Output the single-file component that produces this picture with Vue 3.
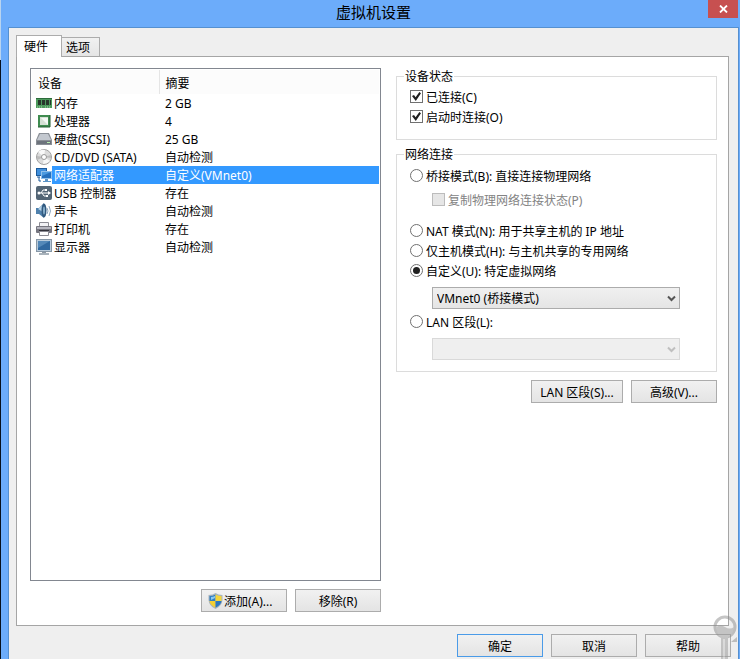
<template>
  <div class="desktop">
    <div class="dialog">
      <header class="title-bar">
        <h1 class="title">虚拟机设置</h1>
        <button type="button" class="close-btn" aria-label="关闭">
          <svg width="9" height="8" viewBox="0 0 9 8">
            <path d="M1 .5 L8 7.500 M8 .5 L1 7.500" stroke="#fff" stroke-width="1.800" fill="none" />
          </svg>
        </button>
      </header>

      <main class="client">
        <nav class="tabs">
          <button
            v-for="tab in tabs"
            :key="tab"
            type="button"
            class="tab"
            :class="{ active: tab === activeTab }"
            @click="activeTab = tab"
          >
            {{ tab }}
          </button>
        </nav>

        <div class="panel">
          <section class="hardware">
            <div class="device-list">
              <table class="device-table">
                <thead>
                  <tr>
                    <th class="col-device">设备</th>
                    <th>摘要</th>
                  </tr>
                </thead>
                <tbody>
                  <tr
                    v-for="device in devices"
                    :key="device.name"
                    :class="{ selected: device.name === selectedDevice }"
                    @click="selectedDevice = device.name"
                  >
                    <td>
                      <div class="device-name">
                        <svg class="device-icon" width="16" height="16" viewBox="0 0 16 16" v-html="device.icon"></svg>
                        <span class="device-label">{{ device.name }}</span>
                      </div>
                    </td>
                    <td>{{ device.summary }}</td>
                  </tr>
                </tbody>
              </table>
            </div>
            <div class="button-row">
              <button type="button" class="btn with-icon">
                <svg class="shield" width="15" height="16" viewBox="0 0 15 16">
                  <path d="M7.500 0 Q10 2 14.500 2 V7 Q14 13 7.500 16 Q1 13 .5 7 V2 Q5 2 7.500 0Z" fill="#a9b4bd" />
                  <path d="M7.500 1.500 V8 H1.500 V3 Q5 3 7.500 1.500Z" fill="#2f7fc4" />
                  <path d="M7.500 1.500 Q10 3 13.500 3 V8 H7.500Z" fill="#f5d63a" />
                  <path d="M1.500 8 H7.500 V14.800 Q2 12 1.500 8Z" fill="#f3cf33" />
                  <path d="M7.500 8 H13.500 Q13 12 7.500 14.800Z" fill="#2c78c0" />
                  <path d="M3 4 Q5 4 7 3 V5 L3 7Z" fill="#8cc9ee" />
                </svg>
                添加(A)...
              </button>
              <button type="button" class="btn">移除(R)</button>
            </div>
          </section>

          <section class="settings">
            <fieldset class="group status-group">
              <legend>设备状态</legend>
              <label class="option">
                <input v-model="connected" type="checkbox" class="check" />
                已连接(C)
              </label>
              <label class="option">
                <input v-model="connectOnStart" type="checkbox" class="check" />
                启动时连接(O)
              </label>
            </fieldset>

            <fieldset class="group network-group">
              <legend>网络连接</legend>
              <label class="option">
                <input v-model="mode" type="radio" name="mode" value="bridged" class="radio" />
                桥接模式(B): 直接连接物理网络
              </label>
              <label class="option nested" :class="{ disabled: mode !== 'bridged' }">
                <input type="checkbox" class="check" :disabled="mode !== 'bridged'" />
                复制物理网络连接状态(P)
              </label>
              <label class="option">
                <input v-model="mode" type="radio" name="mode" value="nat" class="radio" />
                NAT 模式(N): 用于共享主机的 IP 地址
              </label>
              <label class="option">
                <input v-model="mode" type="radio" name="mode" value="host" class="radio" />
                仅主机模式(H): 与主机共享的专用网络
              </label>
              <label class="option">
                <input v-model="mode" type="radio" name="mode" value="custom" class="radio" />
                自定义(U): 特定虚拟网络
              </label>
              <div class="select-box">
                <select v-model="network" class="select" aria-label="特定虚拟网络" :disabled="mode !== 'custom'">
                  <option value="VMnet0">VMnet0 (桥接模式)</option>
                </select>
                <svg class="arrow" width="9" height="7" viewBox="0 0 9 7">
                  <path d="M1 1.500 L4.500 5 L8 1.500" />
                </svg>
              </div>
              <label class="option">
                <input v-model="mode" type="radio" name="mode" value="lan" class="radio" />
                LAN 区段(L):
              </label>
              <div class="select-box">
                <select class="select" aria-label="LAN 区段" :disabled="mode !== 'lan'"></select>
                <svg class="arrow" width="9" height="7" viewBox="0 0 9 7">
                  <path d="M1 1.500 L4.500 5 L8 1.500" />
                </svg>
              </div>
            </fieldset>

            <div class="button-row">
              <button type="button" class="btn wide">LAN 区段(S)...</button>
              <button type="button" class="btn">高级(V)...</button>
            </div>
          </section>
        </div>

        <footer class="button-row footer">
          <button type="button" class="btn default">确定</button>
          <button type="button" class="btn">取消</button>
          <button type="button" class="btn">帮助</button>
        </footer>
      </main>
    </div>

    <svg class="key-mark" width="27" height="44" viewBox="0 0 27 44">
      <circle cx="12" cy="12" r="10" fill="none" stroke="#8c8c8c" stroke-width="3" />
      <path d="M3 12 Q8 9 12 12 Q17 15 21 12 Q20 20 15 22 V44 H8 V22 Q4 20 3 12Z" fill="#9a9a9a" />
      <path d="M11 24 V44" stroke="#c8c8c8" stroke-width="2" />
      <path d="M18 27 L24 22 V27Z" fill="#8c8c8c" />
    </svg>
  </div>
</template>

<script setup>
import { ref } from 'vue'

const tabs = ['硬件', '选项']
const activeTab = ref('硬件')
const selectedDevice = ref('网络适配器')
const connected = ref(true)
const connectOnStart = ref(true)
const mode = ref('custom')
const network = ref('VMnet0')

const devices = [
  {
    name: '内存',
    summary: '2 GB',
    icon: `<path d="M0 3H16V13H0Z" fill="#4c9a5c"/><path d="M0 3H16V4H0Z" fill="#2c6b3a"/>
      <path d="M2 5H5V10H2ZM6 5H9V10H6ZM10 5H13V10H10ZM14 5H15V10H14Z" fill="#26372b"/>
      <path d="M1 12H7M9 12H15" stroke="#a8d8ac" stroke-dasharray="1 1"/>`
  },
  {
    name: '处理器',
    summary: '4',
    icon: `<path d="M2 2H14V14H2Z" fill="#3f8c50"/><path d="M4 4H12V12H4Z" fill="#d4e0d4"/>
      <path d="M5 5H12V12Z" fill="#f4f8f4"/><path d="M2 14H14V2" fill="none" stroke="#245c32"/>`
  },
  {
    name: '硬盘(SCSI)',
    summary: '25 GB',
    icon: `<path d="M3 2H13L16 9V14H0V9Z" fill="#8a8f96"/><path d="M4 3H12L15 9H1Z" fill="#c3c8cf"/>
      <path d="M1 10H15V13H1Z" fill="#6d737c"/><path d="M11 11.500H14" stroke="#b9efb0"/>`
  },
  {
    name: 'CD/DVD (SATA)',
    summary: '自动检测',
    icon: `<circle cx="8" cy="8" r="7.500" fill="#dcdcdc" stroke="#a2a2a2"/>
      <path d="M8 8L2 3Q5 0 9 1ZM8 8L14 12Q11 15 7 15Z" fill="#f8f8f8"/>
      <path d="M8 8L1 7L1 11ZM8 8L15 6V9Z" fill="#bcbcbc"/>
      <circle cx="8" cy="8" r="2.500" fill="#fff" stroke="#999"/>`
  },
  {
    name: '网络适配器',
    summary: '自定义(VMnet0)',
    icon: `<path d="M0 1H11V9H0Z" fill="#1d5b9c"/><path d="M1 2H10V8H1Z" fill="#3f8fdc"/>
      <path d="M5 4H16V12H5Z" fill="#8fc0ea"/><path d="M6 5H15V11H6Z" fill="#2470bd"/>
      <path d="M6 5H15L6 9Z" fill="#4a9ae0"/>
      <path d="M9 12H12V14H15V15H7V14H9Z" fill="#5b93c6"/><path d="M1 10H4M3 10V14H5" fill="none" stroke="#1d5b9c"/>`
  },
  {
    name: 'USB 控制器',
    summary: '存在',
    icon: `<rect x="0" y="1" width="16" height="14" rx="2" fill="#536575"/>
      <path d="M2 8H13M5 8L7 5H10M6 8L8 11H10" fill="none" stroke="#fff"/>
      <circle cx="3" cy="8" r="1.500" fill="#fff"/><path d="M12 6L15 8L12 10ZM9 4H11V6H9ZM10 10H12V12H10Z" fill="#fff"/>`
  },
  {
    name: '声卡',
    summary: '自动检测',
    icon: `<path d="M0 5H3L8 0V15L3 11H0Z" fill="#4f81ad"/><path d="M2 6L7 2V9Z" fill="#b5d4ea"/>
      <ellipse cx="8" cy="7.500" rx="2.500" ry="7" fill="#31597f"/><ellipse cx="8" cy="7.500" rx="1" ry="4" fill="#86aecb"/>
      <path d="M11 5Q13 8 11 11M13 3Q16 8 13 13" fill="none" stroke="#8fa9c0"/>`
  },
  {
    name: '打印机',
    summary: '存在',
    icon: `<path d="M3.500 1.500H12.500V6H3.500Z" fill="#f2f2f5" stroke="#8c8c94"/><rect x="0" y="5" width="16" height="7" rx="1" fill="#75757f"/>
      <path d="M1 6H15V8H1Z" fill="#b7b7c0"/><path d="M3 9H13V10H3Z" fill="#33333b"/>
      <path d="M3.500 10.500H12.500V14.500H3.500Z" fill="#fff" stroke="#8c8c94"/>`
  },
  {
    name: '显示器',
    summary: '自动检测',
    icon: `<path d="M0 0H16V13H0Z" fill="#8797a6"/><path d="M1 1H15V12H1Z" fill="#b9cbdb"/><path d="M2 2H14V11H2Z" fill="#31689f"/>
      <path d="M2 2H14L2 9Z" fill="#5488b8"/><path d="M6 13H10V14H6Z" fill="#8c98a3"/><path d="M3 14H13V16H3Z" fill="#a8b2bb"/>`
  }
]
</script>

<style>
body {
  margin: 0;
}
</style>

<style scoped>
.desktop {
  position: relative;
  min-height: 100vh;
  box-sizing: border-box;
  padding-left: 1px;
  display: flex;
  overflow: hidden;
  background: linear-gradient(#b8d4f0 60px, #06101c 60px);
  font-family: 'Noto Sans', 'Noto Sans CJK SC', sans-serif;
  font-size: 12px;
  line-height: 16px;
  color: #000;
}

.dialog {
  flex: 1;
  display: flex;
  flex-direction: column;
  padding-right: 1px;
  background: #6cacfa;
}

.title-bar {
  display: grid;
  grid-template-columns: 30px 1fr 30px;
  height: 27px;
  padding: 0 1px 0 8px;
}

.title {
  grid-column: 2;
  margin: 0;
  font-size: 15px;
  font-weight: 400;
  line-height: 24px;
  text-align: center;
}

.close-btn {
  height: 18px;
  padding: 0;
  border: 0;
  background: #c75050;
  display: flex;
  align-items: center;
  justify-content: center;
}

.client {
  flex: 1;
  display: flex;
  flex-direction: column;
  margin-left: 7px;
  padding: 7px 9px 2px 7px;
  border: 1px solid #5590d0;
  border-bottom: 0;
  background: #efefef;
}

.tabs {
  display: flex;
  align-items: flex-end;
}

.tab {
  height: 19px;
  padding: 2px 9px 0 4px;
  border: 1px solid #acacac;
  border-left: 0;
  border-bottom: 0;
  background: linear-gradient(#f1f1f1, #e5e5e5);
  font: inherit;
  color: inherit;
}

.tab.active {
  z-index: 1;
  height: 22px;
  margin-bottom: -1px;
  padding: 0 13px 0 7px;
  border-left: 1px solid #acacac;
  background: #fff;
}

.panel {
  flex: 1;
  display: grid;
  grid-template-columns: 351fr 321fr;
  gap: 15px;
  padding: 11px 11px 13px 13px;
  border: 1px solid #a5a5a5;
  background: #fff;
}

.hardware {
  display: flex;
  flex-direction: column;
  gap: 8px;
}

.device-list {
  flex: 1;
  padding: 1px;
  border: 1px solid #828790;
}

.device-table {
  width: 100%;
  border-collapse: collapse;
  table-layout: fixed;
}

.device-table th {
  height: 24px;
  padding: 4px 6px 0;
  box-sizing: border-box;
  background: #fcfcfc;
  font-weight: 400;
  text-align: left;
}

.device-table .col-device {
  width: 127px;
  border-right: 1px solid #e5e5e5;
}

.device-table td {
  height: 18px;
  padding: 2px 6px 0;
  box-sizing: border-box;
  white-space: nowrap;
}

.device-table td:first-child {
  padding: 0 0 0 4px;
}

.device-name {
  display: flex;
  align-items: center;
}

.device-icon {
  flex: none;
}

.device-label {
  flex: 1;
  padding: 2px 0 0 2px;
}

.selected td:last-child,
.selected .device-label {
  background: #3399ff;
  color: #fff;
}

.button-row {
  display: flex;
  justify-content: flex-end;
  gap: 8px;
}

.btn {
  width: 86px;
  height: 23px;
  padding: 2px 0 0;
  border: 1px solid #acacac;
  background: linear-gradient(#f1f1f1, #e4e4e4);
  display: flex;
  align-items: center;
  justify-content: center;
  font: inherit;
  color: inherit;
  white-space: nowrap;
}

.btn.wide {
  width: 92px;
}

.btn.with-icon {
  justify-content: flex-start;
  padding-left: 6px;
}

.btn.default {
  border-color: #4a9be8;
}

.shield {
  margin: 0 1px 2px 0;
}

.group {
  min-width: 0;
  margin: 0;
  border: 1px solid #dcdcdc;
}

.group legend {
  margin-left: -6px;
  padding: 1px 1px 0;
}

.status-group {
  margin-bottom: 6px;
  padding: 3px 13px 11px;
}

.network-group {
  margin-bottom: 8px;
  padding: 4px 13px 8px;
}

.option {
  display: flex;
  align-items: center;
  gap: 3px;
  height: 20px;
  white-space: nowrap;
}

.option.nested {
  margin: 4px 0 11px 22px;
}

.option.disabled {
  color: #838383;
}

.check,
.radio {
  appearance: none;
  flex: none;
  width: 13px;
  height: 13px;
  margin: 0 0 3px;
  border: 1px solid #707070;
  background: #fff;
  display: grid;
  place-items: center;
}

.radio {
  border-radius: 50%;
}

.radio:checked::before {
  content: '';
  width: 7px;
  height: 7px;
  border-radius: 50%;
  background: #212121;
}

.check:checked::before {
  content: '';
  width: 9px;
  height: 9px;
  background: #212121;
  clip-path: polygon(0 45%, 22% 32%, 40% 58%, 82% 0, 100% 15%, 42% 100%);
}

.check:disabled {
  border-color: #bcbcbc;
  background: #e6e6e6;
}

.select-box {
  position: relative;
  margin: 5px 23px 4px 22px;
}

.select-box:last-child {
  margin-bottom: 3px;
}

.select {
  appearance: none;
  display: block;
  width: 100%;
  height: 22px;
  padding: 2px 20px 0 4px;
  border: 1px solid #acacac;
  border-radius: 0;
  background: linear-gradient(#f0f0f0, #e5e5e5);
  font: inherit;
  color: #000;
}

.select:disabled {
  border-color: #d9d9d9;
  background: #efefef;
  opacity: 1;
}

.arrow {
  position: absolute;
  top: 8px;
  right: 4px;
  pointer-events: none;
  fill: none;
  stroke: #555;
  stroke-width: 2px;
}

.select:disabled + .arrow {
  stroke: #bfbfbf;
}

.footer {
  margin: 8px -2px 0 0;
}

.key-mark {
  position: absolute;
  right: 0;
  bottom: 0;
  opacity: 0.5;
  pointer-events: none;
}
</style>
